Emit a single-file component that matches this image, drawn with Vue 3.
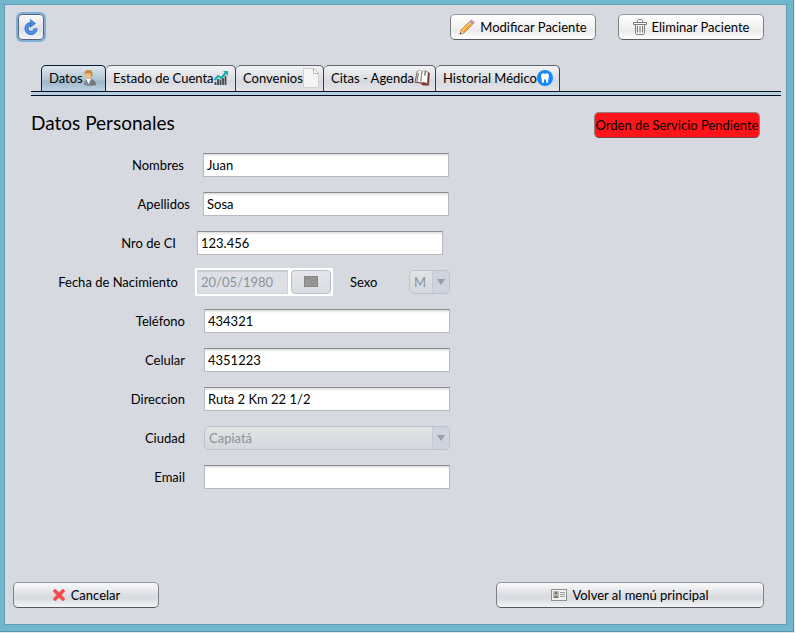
<script setup>
import { ref } from 'vue'

const tabs = [
  { id: 'datos', label: 'Datos' },
  { id: 'cuenta', label: 'Estado de Cuenta' },
  { id: 'convenios', label: 'Convenios' },
  { id: 'citas', label: 'Citas - Agenda' },
  { id: 'historial', label: 'Historial Médico' },
]
const active = ref('datos')

const fields = ref([
  { id: 'nombres', label: 'Nombres', value: 'Juan', kind: 'text', layout: 'name' },
  { id: 'apellidos', label: 'Apellidos', value: 'Sosa', kind: 'text', layout: 'surname' },
  { id: 'ci', label: 'Nro de CI', value: '123.456', kind: 'text', layout: 'document' },
  { id: 'nacimiento', label: 'Fecha de Nacimiento', value: '20/05/1980', kind: 'date', layout: 'date' },
  { id: 'telefono', label: 'Teléfono', value: '434321', kind: 'text', layout: 'contact' },
  { id: 'celular', label: 'Celular', value: '4351223', kind: 'text', layout: 'contact' },
  { id: 'direccion', label: 'Direccion', value: 'Ruta 2 Km 22 1/2', kind: 'text', layout: 'contact' },
  { id: 'ciudad', label: 'Ciudad', value: 'Capiatá', kind: 'select', layout: 'contact' },
  { id: 'email', label: 'Email', value: '', kind: 'text', layout: 'contact' },
])
</script>

<template>
  <div class="frame">
    <main class="window">
      <header class="toolbar">
        <button class="refresh" type="button" aria-label="Actualizar">
          <svg width="16" height="16" viewBox="0 0 16 16">
            <path d="M8 5A4.500 4.500 0 1 0 12.500 9.500" fill="none" stroke="#2561b4" stroke-width="4" />
            <path d="M8 5A4.500 4.500 0 1 0 12.500 9.500" fill="none" stroke="#4d94e4" stroke-width="2.600" />
            <path d="M7.500 .5 12.500 4.500 7.500 8.200Z" fill="#4e8fdb" stroke="#2561b4" stroke-width=".6" />
          </svg>
        </button>
        <div class="actions">
          <button class="btn bright" type="button">
            <svg width="16" height="16" viewBox="0 0 16 16">
              <path d="M2 11 11 2 14 5 5 14 1 15Z" fill="#f6a129" stroke="#b97b2c" stroke-width=".7" />
              <path d="M3.500 11.500 11.500 3.500" stroke="#ffd079" stroke-width="1.300" />
              <path d="M10 3 13 6" stroke="#b8bfc6" stroke-width="1.600" />
              <path d="M11 2 12.500 .8 15.200 3.500 14 5Z" fill="#d894ad" stroke="#a97c98" stroke-width=".6" />
              <path d="M2 11 5 14 1 15Z" fill="#f3d9b2" stroke="#b08d5d" stroke-width=".4" />
              <path d="M1.500 13.300 2.700 14.500 .8 15.200Z" fill="#333" />
            </svg>
            <span>Modificar Paciente</span>
          </button>
          <button class="btn bright" type="button">
            <svg width="14" height="16" viewBox="0 0 14 16" fill="none" stroke="#7b7b7b">
              <path d="M.5 5.500V3.500H13.500V5.500ZM4.500 3V1.500L5.500 .5H8.500L9.500 1.500V3M2.500 5.500V14.500L3.500 15.500H10.500L11.500 14.500V5.500M4.500 7V13.500M7 7V13.500M9.500 7V13.500" />
            </svg>
            <span>Eliminar Paciente</span>
          </button>
        </div>
      </header>

      <nav class="tabs" role="tablist">
        <button
          v-for="tab in tabs"
          :key="tab.id"
          type="button"
          role="tab"
          class="tab"
          :class="[tab.id, { active: active === tab.id }]"
          :aria-selected="active === tab.id"
          @click="active = tab.id"
        >
          <span>{{ tab.label }}</span>
          <svg v-if="tab.id === 'datos'" width="14" height="16" viewBox="0 0 14 16">
            <path d="M1 15C1 11 3 9 6 8.500 10 8.500 13 11 13 15Q7 17 1 15Z" fill="#858a90" />
            <path d="M7 10 11 10.500Q13 12 13 15L8 15.500Z" fill="#74797e" />
            <path d="M3.500 9 5.500 14 8 9Z" fill="#fff" />
            <ellipse cx="5.500" cy="5" rx="3.200" ry="4" fill="#efbd85" />
            <path d="M1.500 5Q1 0 5.500 0 10 0 9.500 5L8.500 8 7.500 3Q4.500 4 3 3Z" fill="#c9873a" />
          </svg>
          <svg v-else-if="tab.id === 'cuenta'" width="14" height="16" viewBox="0 0 14 16">
            <path d="M1.500 15V12M4 15V9M6.500 15V9.500M9 15V8M11.500 15V6" stroke="#43484b" stroke-width="1.800" />
            <path d="M.5 10 4 6 7.500 8 12 2.500" fill="none" stroke="#13afa9" stroke-width="2" />
            <path d="M9 1H14V6Z" fill="#13afa9" />
          </svg>
          <svg v-else-if="tab.id === 'convenios'" width="16" height="20" viewBox="0 0 16 20">
            <path d="M.5 .5H10.500L15.500 5.500V19.500H.5Z" fill="#f5f5f5" stroke="#d1d1d1" />
            <path d="M10.500 .5V5.500H15.500Z" fill="#fff" stroke="#bbb" />
          </svg>
          <svg v-else-if="tab.id === 'citas'" width="16" height="16" viewBox="0 0 16 16">
            <path d="M3 1 .5 12.500 6.500 13.500 9 15.500 15 15.500 15.800 3 13.500 1.500Z" fill="#7e3a2c" />
            <path d="M3.500 .8Q6 -.5 8 1.500L6.500 13Q4 11 1.500 12Z" fill="#fafafa" stroke="#77736e" stroke-width=".5" />
            <path d="M8 1.500Q11 -.5 14 2L13.200 13.500Q9.500 11.500 6.500 13Z" fill="#fff" stroke="#77736e" stroke-width=".5" />
            <path d="M8 2 6.500 13" stroke="#99928d" />
            <path d="M4.500 3 3 11" stroke="#6a6461" />
            <path d="M11.500 1 10.700 5.500" stroke="#5c5553" stroke-width="1.200" />
          </svg>
          <svg v-else width="16" height="16" viewBox="0 0 16 16">
            <circle cx="8" cy="8" r="8" fill="#1687fa" />
            <path d="M4.500 4Q6 2.500 8 4 10 2.500 11.500 4 12.500 6 11.500 8.500L10.800 13H9.500L8.700 9.500Q8 8.500 7.300 9.500L6.500 13H5.200L4.500 8.500Q3.500 6 4.500 4Z" fill="#fff" />
          </svg>
        </button>
      </nav>
      <div class="tab-line"></div>

      <section class="content">
        <div class="heading">
          <h1>Datos Personales</h1>
          <button class="btn alert" type="button">Orden de Servicio Pendiente</button>
        </div>

        <form class="form" @submit.prevent>
          <div v-for="field in fields" :key="field.id" class="row" :class="field.layout">
            <label :for="field.id">{{ field.label }}</label>
            <input v-if="field.kind === 'text'" :id="field.id" v-model="field.value" class="text" type="text" />
            <div v-else-if="field.kind === 'select'" class="combo wide">
              <select :id="field.id" disabled><option>{{ field.value }}</option></select>
            </div>
            <template v-else>
              <div class="date-box">
                <input :id="field.id" v-model="field.value" type="text" disabled />
                <button type="button" disabled aria-label="Elegir fecha">
                  <svg width="14" height="11" viewBox="0 0 14 11">
                    <rect x=".5" y=".5" width="13" height="10" fill="#989898" stroke="#858585" />
                    <path d="M2 2.500H6" stroke="#7d7d7d" />
                    <circle cx="9" cy="6" r="2" fill="#999" stroke="#8a8a8a" />
                  </svg>
                </button>
              </div>
              <label class="sex-label" for="sexo">Sexo</label>
              <div class="combo small">
                <select id="sexo" disabled><option>M</option></select>
              </div>
            </template>
          </div>
        </form>
      </section>

      <footer class="footer">
        <button class="btn cancel" type="button">
          <svg width="14" height="14" viewBox="0 0 14 14">
            <path d="M1 3 3 1 7 4.500 11 1 13 3 9.500 7 13 11 11 13 7 9.500 3 13 1 11 4.500 7Z" fill="#f4494b" stroke="#ec6a68" stroke-width=".8" />
          </svg>
          <span>Cancelar</span>
        </button>
        <button class="btn back" type="button">
          <svg width="16" height="12" viewBox="0 0 16 12">
            <rect x=".5" y=".5" width="15" height="11" fill="#f2f3ef" stroke="#8e9189" />
            <path d="M2 2H8V9H2Z" fill="#b9bbb6" />
            <circle cx="5" cy="4" r="1.500" fill="#777" />
            <path d="M2.500 9Q5 4 7.500 9Z" fill="#777" />
            <path d="M9 3.500H14M9 5.500H14M9 7.500H14" stroke="#999b96" />
          </svg>
          <span>Volver al menú principal</span>
        </button>
      </footer>
    </main>
  </div>
</template>

<style>
body {
  background: #dfe6ee;
}
</style>

<style scoped>
* {
  box-sizing: border-box;
}

.frame {
  min-height: calc(100vh - 1px);
  margin: 0 1px 1px 0;
  padding: 4px 6px 6px 4px;
  display: flex;
  background: #70b7cd;
  border: 1px solid #5796ab;
  border-width: 0 1px 1px 0;
  color: #000;
  font: 13px/18px Lato, "Noto Sans", sans-serif;
}

.window {
  flex: 1;
  min-width: 0;
  display: flex;
  flex-direction: column;
  padding: 9px 6px 16px 8px;
  background: #d6d9e0;
  border: 1px solid #619cb0;
}

button,
input,
select {
  font: inherit;
  color: inherit;
  margin: 0;
}

svg {
  flex: none;
  display: block;
}

.toolbar {
  display: flex;
  justify-content: space-between;
  padding: 0 16px 0 5px;
}

.refresh {
  width: 26px;
  height: 26px;
  padding: 0;
  display: grid;
  place-items: center;
  background: linear-gradient(#f8f9fb, #dcdfe5 60%, #f3f4f7);
  border: 1px solid #56657a;
  border-radius: 4px;
  box-shadow: 0 0 0 2px #80afd5;
}

.actions {
  display: flex;
  gap: 22px;
}

.btn {
  height: 26px;
  display: flex;
  align-items: center;
  justify-content: center;
  gap: 5px;
  padding: 0;
  white-space: nowrap;
  background: linear-gradient(#fafafc, #dfe1e6 45%, #d6d9df 60%, #f3f4f8);
  border: 1px solid #7c7f85;
  border-top-color: #95989e;
  border-bottom-color: #55585e;
  border-radius: 5px;
}

.bright {
  width: 146px;
  background: linear-gradient(#fff, #f2f2f2 50%, #ebebeb 65%, #fff);
}

.tabs {
  display: flex;
  margin-top: 25px;
  padding-left: 28px;
}

.tab {
  height: 26px;
  display: flex;
  align-items: center;
  padding: 0 0 2px 7px;
  white-space: nowrap;
  background: linear-gradient(#f1f2f5, #dfe1e6 45%, #d6d9df 60%, #e3e5ea);
  border: 1px solid #363b46;
  border-top-color: #62656d;
  border-width: 1px 1px 0 0;
  border-radius: 5px 5px 0 0;
}

.tab.active {
  background: linear-gradient(#dfe8ef, #b4c7d7 50%, #a0b8ca 65%, #bbd3e3);
  border-color: #0e1a30;
  border-left-width: 1px;
}

.datos {
  width: 65px;
}

.cuenta {
  width: 130px;
}

.convenios {
  width: 88px;
}

.citas {
  width: 112px;
}

.historial {
  width: 124px;
}

.tab-line {
  height: 5px;
  margin-left: 18px;
  margin-right: -1px;
  background: #b6cfe0;
  border: 1px solid #050d22;
  border-width: 1px 0;
}

.content {
  padding: 16px 20px 0 18px;
}

.heading {
  display: flex;
  justify-content: space-between;
}

h1 {
  margin: 0;
  font-size: 19px;
  font-weight: 400;
  line-height: 22px;
}

.alert {
  width: 166px;
  background: #ff1519;
  border-color: #9a7d80;
  border-bottom-color: #754448;
}

.form {
  padding-top: 7px;
}

.row {
  height: 39px;
  display: flex;
  align-items: center;
}

.row > label:first-child {
  flex: none;
  text-align: right;
  white-space: nowrap;
}

.name > label:first-child {
  width: 153px;
  margin-right: 19px;
}

.surname > label:first-child {
  width: 159px;
  margin-right: 13px;
}

.document > label:first-child {
  width: 145px;
  margin-right: 21px;
}

.date > label:first-child {
  width: 147px;
  margin-right: 17px;
}

.contact > label:first-child {
  width: 154px;
  margin-right: 19px;
}

.text {
  width: 246px;
  height: 24px;
  padding: 0 3px;
  background: linear-gradient(#dcdcdc, #fff 3px);
  border: 1px solid #b7b9be;
  border-top: 1px solid #898b90;
  border-radius: 0;
  outline: none;
}

.date-box {
  width: 138px;
  height: 28px;
  display: flex;
  justify-content: space-between;
  padding: 2px;
  background: #fff;
}

.date-box input {
  width: 91px;
  padding: 0 3px;
  color: #8e9299;
  background: #dce0e6;
  border: 1px solid #d0d3d8;
  border-top: 2px solid #c8ccd2;
}

.date-box button {
  width: 40px;
  padding: 0;
  display: grid;
  place-items: center;
  background: linear-gradient(#e4e6eb, #d8dbe1);
  border: 1px solid #b6bdc9;
  border-radius: 4px;
}

.sex-label {
  width: 28px;
  margin: 0 31px 0 17px;
}

.combo {
  position: relative;
  height: 24px;
}

.combo::after {
  content: "";
  position: absolute;
  right: 5px;
  top: 9px;
  border: 4px solid transparent;
  border-top: 6px solid #9a9ea6;
  border-bottom: 0;
  pointer-events: none;
}

.combo select {
  width: 100%;
  height: 100%;
  padding: 0 4px;
  appearance: none;
  opacity: 1;
  color: #8e9299;
  background:
    linear-gradient(90deg, #c2cbd7 1px, #ccd4df 1px) right / 17px 100% no-repeat,
    linear-gradient(#e0e2e6, #d4d7dd);
  border: 1px solid #bcc3cf;
  border-radius: 5px;
}

.wide {
  width: 246px;
}

.small {
  width: 41px;
}

.footer {
  display: flex;
  justify-content: space-between;
  margin-top: auto;
  padding-right: 16px;
}

.cancel {
  width: 146px;
}

.back {
  width: 268px;
}
</style>
